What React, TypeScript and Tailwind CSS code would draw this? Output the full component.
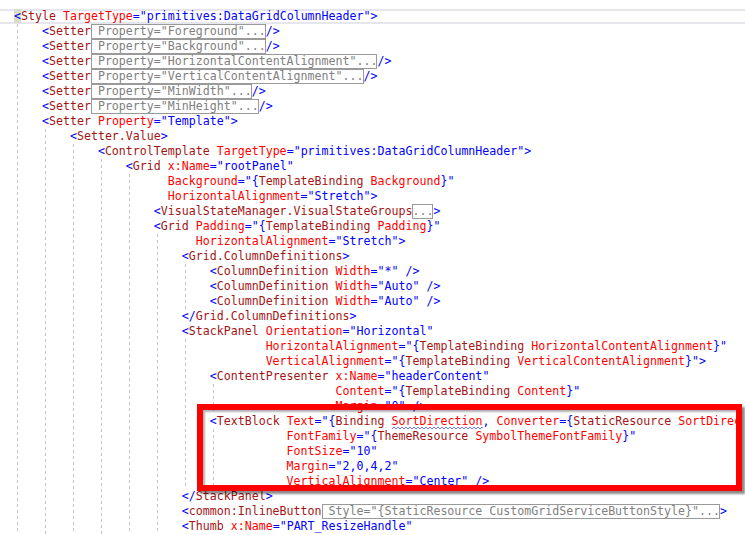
import React from "react";

type Tok = { t: string; c: string };
type Seg = string | { box: string };
type Line = { col: number; segs: Seg[] };

const BLUE = "text-[#0000ff]";
const DARK = "text-[#a31515]";
const RED = "text-[#ff0000]";

// tiny xaml colouriser, good enough for the lines below
function markup(body: string, out: Tok[]) {
    let i = 0;
    let afterBrace = false;
    while (i < body.length) {
        const ch = body[i];
        if (ch === " ") {
            out.push({ t: " ", c: "" });
            i++;
            continue;
        }
        if (ch === "{" || ch === "}" || ch === "," || ch === "=") {
            out.push({ t: ch, c: BLUE });
            afterBrace = ch === "{";
            i++;
            continue;
        }
        const m = /^[^\s{},=]+/.exec(body.slice(i));
        if (m) {
            out.push({ t: m[0], c: afterBrace ? DARK : RED });
            afterBrace = false;
            i += m[0].length;
            continue;
        }
        i++;
    }
}

function lex(s: string): Tok[] {
    const out: Tok[] = [];
    let i = 0;
    while (i < s.length) {
        const ch = s[i];
        if (ch === " ") {
            let j = i;
            while (j < s.length && s[j] === " ") j++;
            out.push({ t: s.slice(i, j), c: "" });
            i = j;
            continue;
        }
        if (ch === "<") {
            const open = s[i + 1] === "/" ? "</" : "<";
            out.push({ t: open, c: BLUE });
            i += open.length;
            const m = /^[\w.:]+/.exec(s.slice(i));
            if (m) {
                out.push({ t: m[0], c: DARK });
                i += m[0].length;
            }
            continue;
        }
        if (s.startsWith("/>", i)) {
            out.push({ t: "/>", c: BLUE });
            i += 2;
            continue;
        }
        if (ch === ">" || ch === "=") {
            out.push({ t: ch, c: BLUE });
            i++;
            continue;
        }
        if (ch === '"') {
            const j = s.indexOf('"', i + 1);
            const end = j === -1 ? s.length : j;
            out.push({ t: '"', c: BLUE });
            const body = s.slice(i + 1, end);
            if (body.startsWith("{")) markup(body, out);
            else out.push({ t: body, c: BLUE });
            if (j !== -1) out.push({ t: '"', c: BLUE });
            i = j === -1 ? s.length : j + 1;
            continue;
        }
        const m = /^[\w.:]+/.exec(s.slice(i));
        if (m) {
            out.push({ t: m[0], c: RED });
            i += m[0].length;
            continue;
        }
        out.push({ t: ch, c: BLUE });
        i++;
    }
    return out;
}

const setter = (p: string): Seg[] => ["<Setter", { box: ` Property="${p}"...` }, "/>"];

const lines: Line[] = [
    { col: 0, segs: ['<Style TargetType="primitives:DataGridColumnHeader">'] },
    { col: 4, segs: setter("Foreground") },
    { col: 4, segs: setter("Background") },
    { col: 4, segs: setter("HorizontalContentAlignment") },
    { col: 4, segs: setter("VerticalContentAlignment") },
    { col: 4, segs: setter("MinWidth") },
    { col: 4, segs: setter("MinHeight") },
    { col: 4, segs: ['<Setter Property="Template">'] },
    { col: 8, segs: ["<Setter.Value>"] },
    { col: 12, segs: ['<ControlTemplate TargetType="primitives:DataGridColumnHeader">'] },
    { col: 16, segs: ['<Grid x:Name="rootPanel"'] },
    { col: 22, segs: ['Background="{TemplateBinding Background}"'] },
    { col: 22, segs: ['HorizontalAlignment="Stretch">'] },
    { col: 20, segs: ["<VisualStateManager.VisualStateGroups", { box: "..." }, ">"] },
    { col: 20, segs: ['<Grid Padding="{TemplateBinding Padding}"'] },
    { col: 26, segs: ['HorizontalAlignment="Stretch">'] },
    { col: 24, segs: ["<Grid.ColumnDefinitions>"] },
    { col: 28, segs: ['<ColumnDefinition Width="*" />'] },
    { col: 28, segs: ['<ColumnDefinition Width="Auto" />'] },
    { col: 28, segs: ['<ColumnDefinition Width="Auto" />'] },
    { col: 24, segs: ["</Grid.ColumnDefinitions>"] },
    { col: 24, segs: ['<StackPanel Orientation="Horizontal"'] },
    { col: 36, segs: ['HorizontalAlignment="{TemplateBinding HorizontalContentAlignment}"'] },
    { col: 36, segs: ['VerticalAlignment="{TemplateBinding VerticalContentAlignment}">'] },
    { col: 28, segs: ['<ContentPresenter x:Name="headerContent"'] },
    { col: 46, segs: ['Content="{TemplateBinding Content}"'] },
    { col: 46, segs: ['Margin="0" />'] },
    { col: 28, segs: ['<TextBlock Text="{Binding SortDirection, Converter={StaticResource SortDirec'] },
    { col: 39, segs: ['FontFamily="{ThemeResource SymbolThemeFontFamily}"'] },
    { col: 39, segs: ['FontSize="10"'] },
    { col: 39, segs: ['Margin="2,0,4,2"'] },
    { col: 39, segs: ['VerticalAlignment="Center" />'] },
    { col: 24, segs: ["</StackPanel>"] },
    { col: 24, segs: ["<common:InlineButton", { box: ' Style="{StaticResource CustomGridServiceButtonStyle}"...' }, ">"] },
    { col: 24, segs: ['<Thumb x:Name="PART_ResizeHandle"'] },
];

// indent guides: [column of parent, first line, last line] (1-based lines)
const guides: [number, number, number][] = [
    [0, 2, 35],
    [4, 9, 35],
    [8, 10, 35],
    [12, 11, 35],
    [16, 12, 35],
    [20, 16, 35],
    [24, 18, 20],
    [24, 23, 32],
    [28, 26, 27],
    [28, 29, 32],
];

const TOP = 9;
const LH = 15;
const CW = 7;

// blue squiggle under a word, like the editor's info marker
function Squiggle({ chars }: { chars: number }) {
    const w = chars * CW;
    let d = "M0 2";
    for (let x = 0; x < w; x += 4) d += ` L${x + 2} 0 L${x + 4} 2`;
    return (
        <svg className="absolute left-0 top-[13px]" width={w} height={3}>
            <path d={d} fill="none" stroke="#7878ff" strokeWidth={1} />
        </svg>
    );
}

function CodeLine({ line, idx }: { line: Line; idx: number }) {
    let first = true;
    return (
        <div
            className={
                "h-[15px] leading-[15px] whitespace-pre pl-[14px] " +
                (idx === 0 ? "shadow-[inset_0_2px_0_#e6e6ee,inset_0_-2px_0_#e6e6ee]" : "")
            }
        >
            {" ".repeat(line.col)}
            {line.segs.map((seg, i) => {
                if (typeof seg !== "string") {
                    return (
                        <span
                            key={i}
                            className="inline-block h-[15px] leading-[15px] align-top text-[#808080] shadow-[inset_0_0_0_1px_#9a9a9a]"
                        >
                            {seg.box}
                        </span>
                    );
                }
                return lex(seg).map((tk, j) => {
                    let cls = tk.c;
                    if (idx === 0 && first && tk.t === "<") cls += " bg-[#d9dcc9]";
                    first = false;
                    if (tk.t === "SortDirection") {
                        return (
                            <span key={i + "-" + j} className={cls + " relative"}>
                                {tk.t}
                                <Squiggle chars={tk.t.length} />
                            </span>
                        );
                    }
                    return (
                        <span key={i + "-" + j} className={cls}>
                            {tk.t}
                        </span>
                    );
                });
            })}
        </div>
    );
}

export default function App() {
    return (
        <div
            className="relative w-[745px] h-[535px] overflow-hidden bg-white text-black text-[11.627px]"
            style={{ fontFamily: '"DejaVu Sans Mono", "Liberation Mono", monospace' }}
        >
            <svg className="absolute inset-0 pointer-events-none" width={745} height={535}>
                {guides.map(([col, a, b], i) => {
                    const x = 17.5 + col * CW;
                    return (
                        <line
                            key={i}
                            x1={x}
                            x2={x}
                            y1={TOP + (a - 1) * LH}
                            y2={TOP + b * LH}
                            stroke="#c4c4c4"
                            strokeWidth={1}
                            strokeDasharray="3 3"
                        />
                    );
                })}
            </svg>

            <div className="relative pt-[9px]">
                {lines.map((l, i) => (
                    <CodeLine key={i} line={l} idx={i} />
                ))}
            </div>

            {/* red annotation frame */}
            <div className="absolute left-[197px] top-[404px] w-[545px] h-[87px] border-[6px] border-[#ff0000] shadow-[3px_3px_2px_rgba(0,0,0,0.45),inset_2px_2px_2px_rgba(0,0,0,0.3)]" />
        </div>
    );
}
